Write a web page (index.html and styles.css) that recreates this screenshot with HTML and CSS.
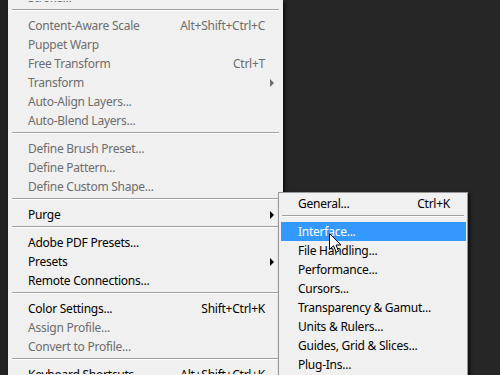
FILE: index.html
```html
<!DOCTYPE html>
<html lang="en">

<head>
    <meta charset="UTF-8">
    <title>Edit menu - Preferences</title>
    <link rel="stylesheet" href="styles.css">
</head>

<body>
    <div class="desk">
        <div class="strip"></div>

        <div class="menu main">
            <ul class="list">
                <li class="item off"><span class="label">Stroke...</span></li>
                <li class="sep"></li>
                <li class="item off"><span class="label">Content-Aware Scale</span><span class="key">Alt+Shift+Ctrl+C</span></li>
                <li class="item off"><span class="label">Puppet Warp</span></li>
                <li class="item off"><span class="label">Free Transform</span><span class="key">Ctrl+T</span></li>
                <li class="item off"><span class="label">Transform</span><span class="arrow"></span></li>
                <li class="item off"><span class="label">Auto-Align Layers...</span></li>
                <li class="item off"><span class="label">Auto-Blend Layers...</span></li>
                <li class="sep"></li>
                <li class="item off"><span class="label">Define Brush Preset...</span></li>
                <li class="item off"><span class="label">Define Pattern...</span></li>
                <li class="item off"><span class="label">Define Custom Shape...</span></li>
                <li class="sep"></li>
                <li class="item"><span class="label">Purge</span><span class="arrow"></span></li>
                <li class="sep"></li>
                <li class="item"><span class="label">Adobe PDF Presets...</span></li>
                <li class="item"><span class="label">Presets</span><span class="arrow"></span></li>
                <li class="item"><span class="label">Remote Connections...</span></li>
                <li class="sep"></li>
                <li class="item"><span class="label">Color Settings...</span><span class="key">Shift+Ctrl+K</span></li>
                <li class="item off"><span class="label">Assign Profile...</span></li>
                <li class="item off"><span class="label">Convert to Profile...</span></li>
                <li class="sep"></li>
                <li class="item"><span class="label">Keyboard Shortcuts...</span><span class="key">Alt+Shift+Ctrl+K</span></li>
            </ul>
        </div>
    </div>

    <!-- Preferences submenu -->
    <div class="menu sub">
        <ul class="list">
            <li class="item"><span class="label">General...</span><span class="key">Ctrl+K</span></li>
            <li class="sep"></li>
            <li class="item active"><span class="label">Interface...</span></li>
            <li class="item"><span class="label">File Handling...</span></li>
            <li class="item"><span class="label">Performance...</span></li>
            <li class="item"><span class="label">Cursors...</span></li>
            <li class="item"><span class="label">Transparency &amp; Gamut...</span></li>
            <li class="item"><span class="label">Units &amp; Rulers...</span></li>
            <li class="item"><span class="label">Guides, Grid &amp; Slices...</span></li>
            <li class="item"><span class="label">Plug-Ins...</span></li>
            <li class="item"><span class="label">Type...</span></li>
        </ul>
    </div>

    <svg class="cursor" width="13" height="21" viewBox="0 0 13 21">
        <path d="M0.5 0.5 L0.5 16.5 L4.5 12.8 L7.2 19.2 L9.6 18.2 L7 12 L12 12 Z" fill="#fff" stroke="#000" stroke-width="1" stroke-linejoin="miter" />
    </svg>
</body>

</html>
```

FILE: styles.css
```css
* {
    margin: 0;
    padding: 0;
    box-sizing: border-box;
}

body {
    background: #262626;
    width: 500px;
    height: 375px;
    overflow: hidden;
    position: relative;
    font-family: 'Noto Sans', 'Open Sans', sans-serif;
    font-size: 12px;
    letter-spacing: -0.25px;
}

.desk {
    display: flex;
    height: 375px;
}

.strip {
    width: 8px;
    background: #232323;
}

.menu {
    background: #f0f0f0;
    border: 1px solid #979797;
    padding: 1px 1px 1px 2px;
    box-shadow: 2px 2px 3px rgba(0, 0, 0, 0.6);
}

.main {
    width: 275px;
    border-color: #f0f0f0;
    overflow: hidden;
}

/* menu is scrolled: the first row sits above the window */
.main .list {
    margin-top: -14px;
}

.sub {
    position: absolute;
    left: 278px;
    top: 192px;
    width: 190px;
    height: 200px;
}

.list {
    list-style: none;
}

.item {
    display: grid;
    grid-template-columns: 1fr auto 16px;
    align-items: center;
    height: 19px;
    padding-left: 17px;
    color: #000;
    white-space: nowrap;
}

.item.off {
    color: #6d6d6d;
}

.item.active {
    background: #3399ff;
    color: #fff;
}

.key {
    grid-column: 2;
}

.arrow {
    grid-column: 3;
    justify-self: start;
    margin-left: 5px;
    width: 0;
    height: 0;
    border-top: 4px solid transparent;
    border-bottom: 4px solid transparent;
    border-left: 4px solid currentColor;
}

.sep {
    height: 9px;
    padding-top: 2px;
    margin: 0 2px 0 1px;
}

.sep::before {
    content: '';
    display: block;
    border-top: 1px solid #a0a0a0;
    border-bottom: 1px solid #ffffff;
}

.cursor {
    position: absolute;
    left: 329px;
    top: 233px;
}
```
